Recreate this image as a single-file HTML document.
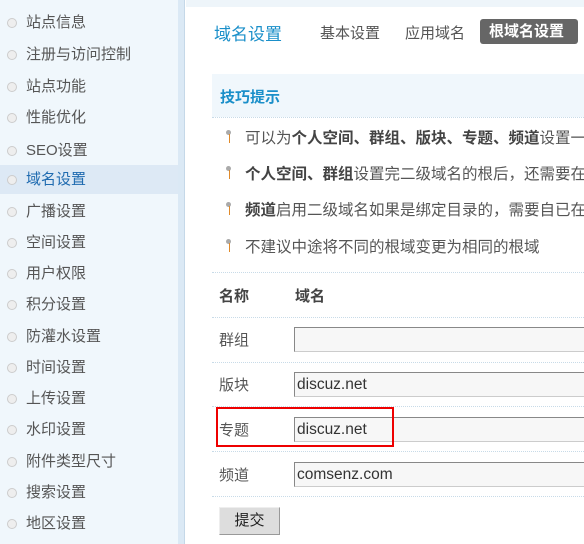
<!DOCTYPE html>
<html><head><meta charset="utf-8"><style>
*{margin:0;padding:0;box-sizing:border-box}
html,body{width:584px;height:544px;overflow:hidden}
body{background:#fff;font-family:"Liberation Sans","Noto Sans CJK SC",sans-serif;position:relative;color:#555}
#side{position:absolute;left:0;top:0;width:178px;height:544px;background:#f0f7fc}
#strip{position:absolute;left:178px;top:0;width:7px;height:544px;background:#dbe9f5;border-right:1px solid #c5d8e8}
.m{position:absolute;left:0;width:178px;height:29px;line-height:29px;font-size:15px;padding-left:26px;color:#555}
.m:before{content:"";position:absolute;left:7px;top:10px;width:8px;height:8px;border-radius:50%;border:1px solid #ccc;background:#eee}
.m.on{background:#dde9f5;color:#1f6bb0}
#main{position:absolute;left:186px;top:0;width:398px;height:544px;overflow:hidden}
#topband{position:absolute;left:0;top:0;width:398px;height:7px;background:#eef5fa}
.a{position:absolute;white-space:nowrap}
.tip{position:absolute;left:59px;font-size:15.5px;color:#555;white-space:nowrap}
.tip:before{content:"";position:absolute;left:-19px;top:4px;width:5px;height:5px;border-radius:50%;background:#aaa}
.tip:after{content:"";position:absolute;left:-16px;top:8px;width:1px;height:9px;background:#e08a2a}
.dl{position:absolute;left:26px;width:372px;border-top:1px dotted #c8dbe8}
.lab{position:absolute;left:33px;font-size:15px;color:#555}
.in{position:absolute;left:108px;width:300px;height:25px;border:1px solid #888;border-right:none;border-bottom-color:#ccc;background:#f7f7f7;font-size:15.5px;line-height:24px;padding-left:2px;color:#333}
b{color:#444}
</style></head><body>
<div id="side"></div><div id="strip"></div>
<div class="m" style="top:8px">站点信息</div>
<div class="m" style="top:40px">注册与访问控制</div>
<div class="m" style="top:72px">站点功能</div>
<div class="m" style="top:103px">性能优化</div>
<div class="m" style="top:136px">SEO设置</div>
<div class="m on" style="top:165px">域名设置</div>
<div class="m" style="top:197px">广播设置</div>
<div class="m" style="top:228px">空间设置</div>
<div class="m" style="top:259px">用户权限</div>
<div class="m" style="top:290px">积分设置</div>
<div class="m" style="top:322px">防灌水设置</div>
<div class="m" style="top:353px">时间设置</div>
<div class="m" style="top:384px">上传设置</div>
<div class="m" style="top:415px">水印设置</div>
<div class="m" style="top:447px">附件类型尺寸</div>
<div class="m" style="top:478px">搜索设置</div>
<div class="m" style="top:509px">地区设置</div>

<div id="main">
<div id="topband"></div>
<div class="a" style="left:28px;top:20px;font-size:17px;color:#1a8fc9">域名设置</div>
<div class="a" style="left:134px;top:22px;font-size:15px;color:#555">基本设置</div>
<div class="a" style="left:219px;top:22px;font-size:15px;color:#555">应用域名</div>
<div class="a" style="left:294px;top:19px;width:98px;height:25px;background:#666;border-radius:3px;color:#fff;font-size:15px;line-height:25px;padding-left:9px;font-weight:bold">根域名设置</div>

<div class="a" style="left:26px;top:74px;width:372px;height:43px;background:#f0f7fc"></div>
<div class="a" style="left:34px;top:86px;font-size:15px;font-weight:bold;color:#1a8fc9">技巧提示</div>
<div class="dl" style="top:117px"></div>
<div class="tip" style="top:126px">可以为<b>个人空间、群组、版块、专题、频道</b>设置一个二级域名的根域</div>
<div class="tip" style="top:162px"><b>个人空间、群组</b>设置完二级域名的根后，还需要在基本设置中开启</div>
<div class="tip" style="top:198px"><b>频道</b>启用二级域名如果是绑定目录的，需要自已在环境中配置</div>
<div class="tip" style="top:235px">不建议中途将不同的根域变更为相同的根域</div>
<div class="dl" style="top:272px"></div>
<div class="lab" style="top:285px;font-weight:bold;color:#444">名称</div>
<div class="lab" style="top:285px;left:109px;font-weight:bold;color:#444">域名</div>
<div class="dl" style="top:317px"></div>
<div class="lab" style="top:329px">群组</div><div class="in" style="top:327px"></div>
<div class="dl" style="top:362px"></div>
<div class="lab" style="top:374px">版块</div><div class="in" style="top:372px">discuz.net</div>
<div class="dl" style="top:406px"></div>
<div class="lab" style="top:419px">专题</div><div class="in" style="top:417px">discuz.net</div>
<div class="dl" style="top:451px"></div>
<div class="lab" style="top:464px">频道</div><div class="in" style="top:462px">comsenz.com</div>
<div class="dl" style="top:496px"></div>
<div class="a" style="left:30px;top:407px;width:178px;height:40px;border:2px solid #e00"></div>
<div class="a" style="left:33px;top:507px;width:61px;height:28px;background:#ddd;border:1px solid #999;border-top-color:#eee;border-left-color:#eee;font-size:15px;line-height:26px;text-align:center;color:#222">提交</div>
</div>
</body></html>
